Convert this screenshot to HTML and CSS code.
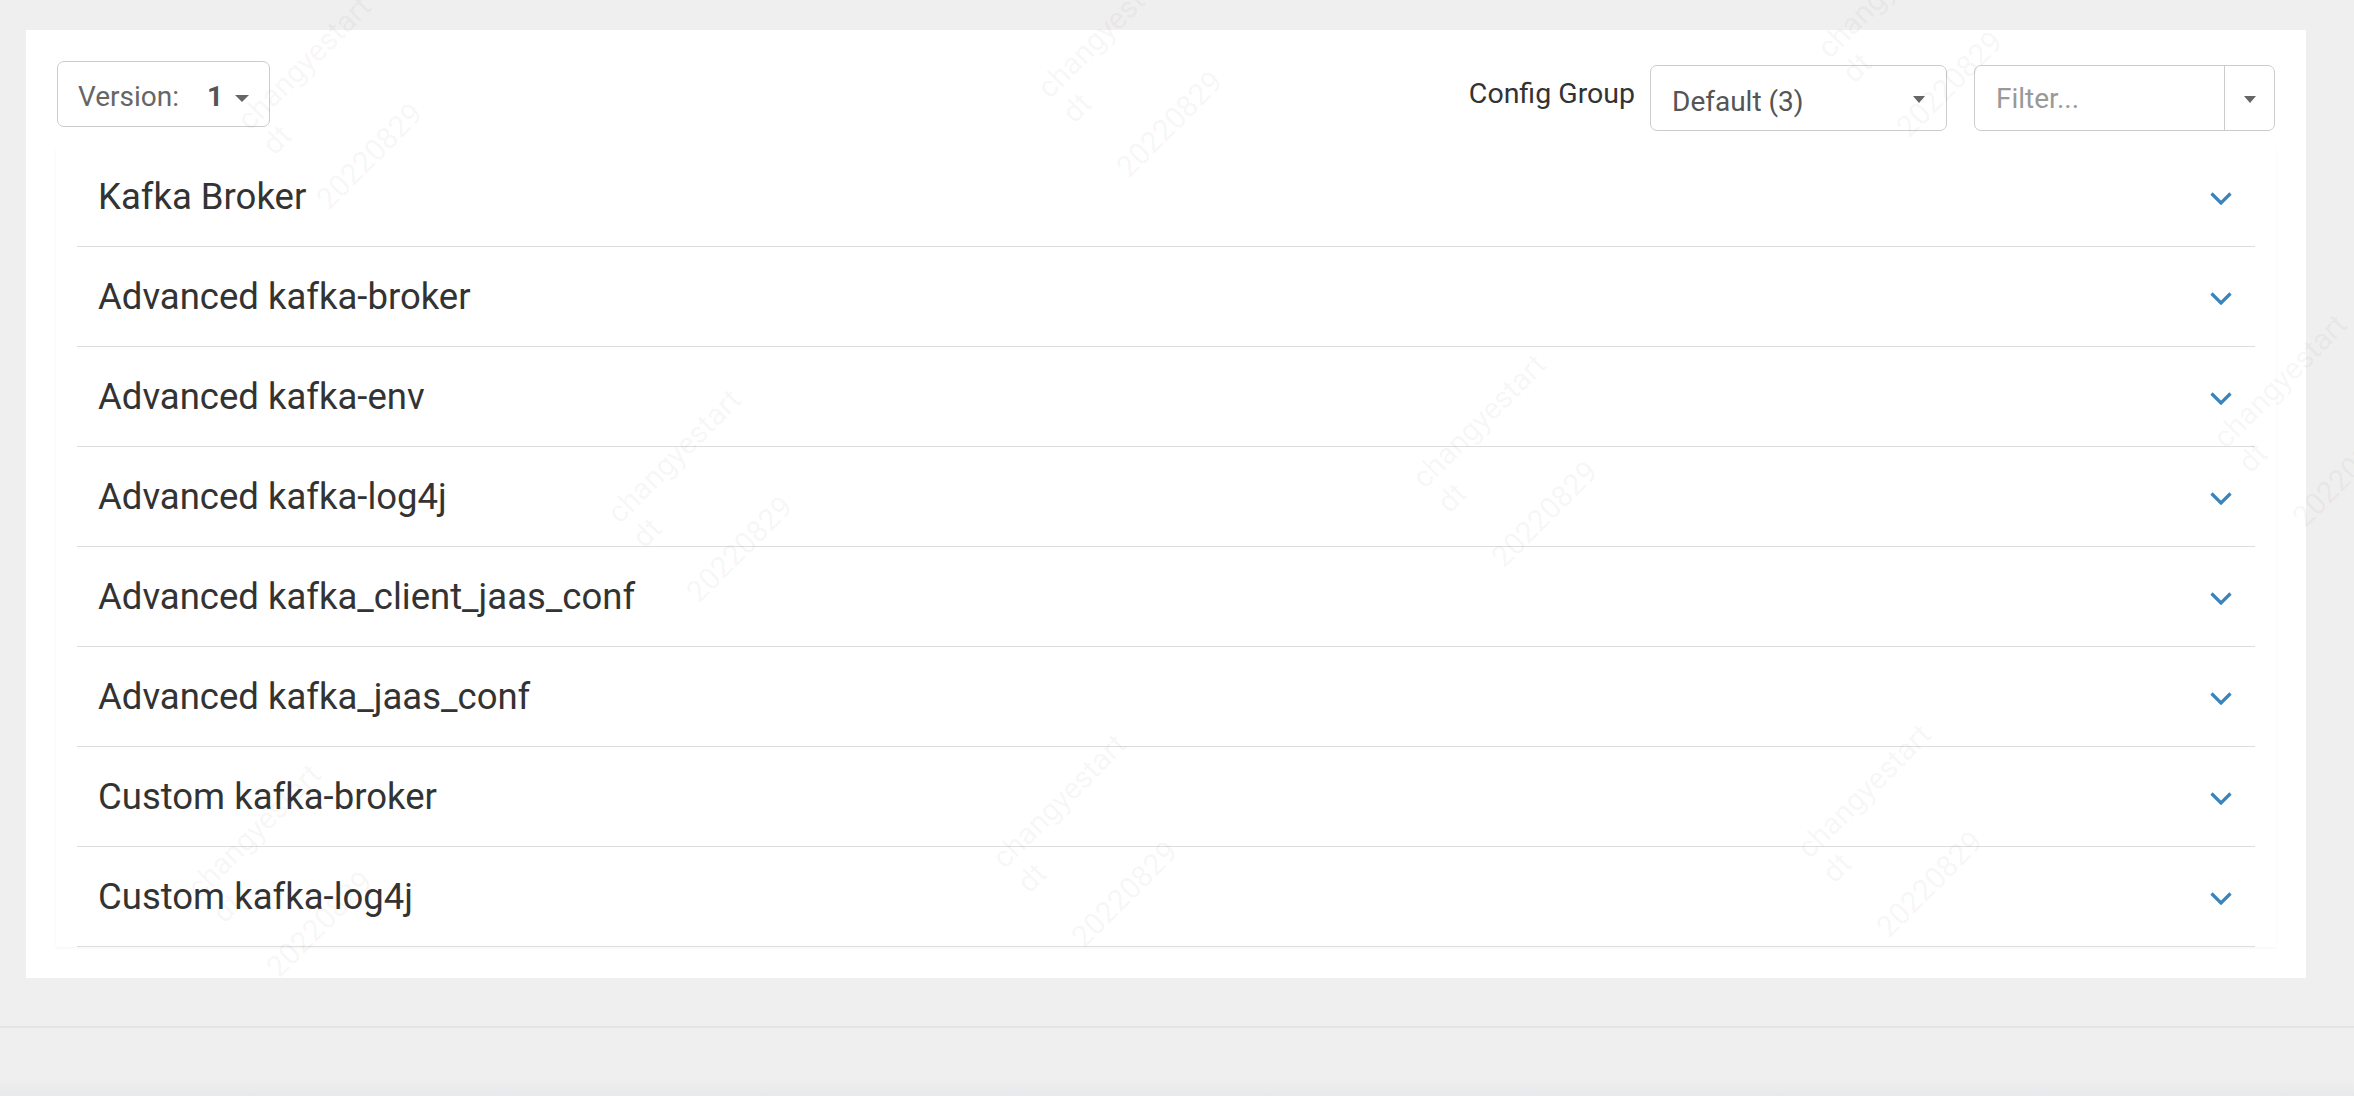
FILE: index.html
```html
<!DOCTYPE html>
<html>
<head>
    <title>Kafka Configs</title>
    <link rel="stylesheet" href="styles.css">
</head>
<body>
    <div class="page">
        <div class="panel">
            <div class="toolbar">
                <button class="version-btn">
                    <span class="version-label">Version:</span>
                    <span class="version-num">1</span>
                    <span class="caret"></span>
                </button>

                <div class="toolbar-right">
                    <span class="group-label">Config Group</span>
                    <div class="select-box">
                        <span>Default (3)</span>
                        <span class="caret caret-sm"></span>
                    </div>
                    <div class="filter-group">
                        <input class="filter-input" type="text" placeholder="Filter...">
                        <span class="filter-toggle"><span class="caret caret-sm"></span></span>
                    </div>
                </div>
            </div>

            <div class="accordion">
                <div class="acc-row">
                    <span class="acc-title">Kafka Broker</span>
                    <svg class="chevron" viewBox="0 0 22 13"><polyline points="1.5,1.5 11,11 20.5,1.5"/></svg>
                </div>
                <div class="acc-row">
                    <span class="acc-title">Advanced kafka-broker</span>
                    <svg class="chevron" viewBox="0 0 22 13"><polyline points="1.5,1.5 11,11 20.5,1.5"/></svg>
                </div>
                <div class="acc-row">
                    <span class="acc-title">Advanced kafka-env</span>
                    <svg class="chevron" viewBox="0 0 22 13"><polyline points="1.5,1.5 11,11 20.5,1.5"/></svg>
                </div>
                <div class="acc-row">
                    <span class="acc-title">Advanced kafka-log4j</span>
                    <svg class="chevron" viewBox="0 0 22 13"><polyline points="1.5,1.5 11,11 20.5,1.5"/></svg>
                </div>
                <div class="acc-row">
                    <span class="acc-title">Advanced kafka_client_jaas_conf</span>
                    <svg class="chevron" viewBox="0 0 22 13"><polyline points="1.5,1.5 11,11 20.5,1.5"/></svg>
                </div>
                <div class="acc-row">
                    <span class="acc-title">Advanced kafka_jaas_conf</span>
                    <svg class="chevron" viewBox="0 0 22 13"><polyline points="1.5,1.5 11,11 20.5,1.5"/></svg>
                </div>
                <div class="acc-row">
                    <span class="acc-title">Custom kafka-broker</span>
                    <svg class="chevron" viewBox="0 0 22 13"><polyline points="1.5,1.5 11,11 20.5,1.5"/></svg>
                </div>
                <div class="acc-row">
                    <span class="acc-title">Custom kafka-log4j</span>
                    <svg class="chevron" viewBox="0 0 22 13"><polyline points="1.5,1.5 11,11 20.5,1.5"/></svg>
                </div>
            </div>
        </div>
    </div>

    <div class="page-footer"></div>

    <!-- watermark overlay -->
    <div class="watermarks">
        <div class="wm wm-1"><div>changyestart</div><div>dt</div><div class="wm-date">20220829</div></div>
        <div class="wm wm-2"><div>changyestart</div><div>dt</div><div class="wm-date">20220829</div></div>
        <div class="wm wm-3"><div>changyestart</div><div>dt</div><div class="wm-date">20220829</div></div>
        <div class="wm wm-4"><div>changyestart</div><div>dt</div><div class="wm-date">20220829</div></div>
        <div class="wm wm-5"><div>changyestart</div><div>dt</div><div class="wm-date">20220829</div></div>
        <div class="wm wm-6"><div>changyestart</div><div>dt</div><div class="wm-date">20220829</div></div>
        <div class="wm wm-7"><div>changyestart</div><div>dt</div><div class="wm-date">20220829</div></div>
        <div class="wm wm-8"><div>changyestart</div><div>dt</div><div class="wm-date">20220829</div></div>
        <div class="wm wm-9"><div>changyestart</div><div>dt</div><div class="wm-date">20220829</div></div>
    </div>
</body>
</html>
```

FILE: styles.css
```css
body {
    margin: 0;
    background: #efefef;
    font-family: Roboto, 'Liberation Sans', sans-serif;
    color: #333;
    height: 1096px;
    position: relative;
    overflow: hidden;
}

.page {
    padding: 30px 48px 0 26px;
}

.panel {
    background: #fff;
    padding: 31px 30px;
}

/* top toolbar */
.toolbar {
    display: flex;
    justify-content: space-between;
    align-items: flex-start;
    padding: 0 1px;
    margin-bottom: 16px;
}

.version-btn {
    box-sizing: border-box;
    width: 213px;
    height: 66px;
    display: flex;
    align-items: center;
    padding: 5px 0 0 20px;
    border: 1.5px solid #ccc;
    border-radius: 7px;
    background: #fff;
    font-family: Roboto, 'Liberation Sans', sans-serif;
    font-size: 28px;
    color: #666;
}

.version-num {
    margin-left: 28px;
    font-weight: 700;
    color: #555;
}

.caret {
    display: inline-block;
    width: 0;
    height: 0;
    margin-left: 12px;
    margin-top: 3px;
    border-left: 7.5px solid transparent;
    border-right: 7.5px solid transparent;
    border-top: 7.5px solid #666;
}

.caret-sm {
    margin-left: 0;
    border-left-width: 6.5px;
    border-right-width: 6.5px;
    border-top-width: 7px;
}

.toolbar-right {
    display: flex;
    align-items: center;
    margin-top: 4px;
}

.group-label {
    font-size: 28.5px;
    color: #333;
    margin-right: 15px;
    margin-bottom: 9px;
}

.select-box {
    box-sizing: border-box;
    width: 297px;
    height: 66px;
    display: flex;
    align-items: center;
    justify-content: space-between;
    padding: 7px 21px 0 21px;
    border: 1.5px solid #ccc;
    border-radius: 7px;
    font-size: 28px;
    color: #555;
}

.select-box .caret {
    margin-top: -5px;
}

.filter-group {
    box-sizing: border-box;
    width: 301px;
    height: 66px;
    margin-left: 27px;
    display: flex;
    border: 1.5px solid #ccc;
    border-radius: 7px;
    overflow: hidden;
}

.filter-input {
    flex: 1;
    min-width: 0;
    border: none;
    outline: none;
    padding: 0 0 0 21px;
    font-family: Roboto, 'Liberation Sans', sans-serif;
    font-size: 28px;
    color: #555;
    background: transparent;
}

.filter-input::placeholder {
    color: #999;
}

.filter-toggle {
    width: 49px;
    border-left: 1.5px solid #ccc;
    display: flex;
    align-items: center;
    justify-content: center;
}

/* config sections */
.accordion {
    padding: 0 21px;
    box-shadow: 0 1px 3px rgba(0, 0, 0, 0.045);
}

.acc-row {
    box-sizing: border-box;
    height: 100px;
    display: flex;
    align-items: center;
    justify-content: space-between;
    padding: 0 23px 0 21px;
    border-bottom: 1.5px solid #ddd;
}

.acc-title {
    font-size: 36.5px;
    color: #333;
}

.chevron {
    width: 22px;
    height: 13px;
    margin-top: 3px;
}

.chevron polyline {
    fill: none;
    stroke: #3a84bc;
    stroke-width: 3.2;
}

.page-footer {
    margin-top: 48px;
    height: 70px;
    border-top: 2px solid #e3e3e3;
    background: linear-gradient(to bottom, #efefef 0, #efefef 50px, #e7e8ec 100%);
}

/* watermark */
.watermarks {
    position: absolute;
    top: 0;
    left: 0;
    width: 100%;
    height: 100%;
    overflow: hidden;
    pointer-events: none;
}

.wm {
    position: absolute;
    transform: rotate(-45deg);
    transform-origin: 0 0;
    font-size: 30px;
    line-height: 35px;
    white-space: nowrap;
    color: rgba(0, 0, 0, 0.055);
}

.wm-date {
    margin-top: 42px;
}

.wm-1 { left: 230px; top: 112px; }
.wm-2 { left: 1030px; top: 80px; }
.wm-3 { left: 1810px; top: 40px; }
.wm-4 { left: 600px; top: 505px; }
.wm-5 { left: 1405px; top: 470px; }
.wm-6 { left: 2206px; top: 430px; }
.wm-7 { left: 180px; top: 880px; }
.wm-8 { left: 985px; top: 850px; }
.wm-9 { left: 1790px; top: 840px; }
```
